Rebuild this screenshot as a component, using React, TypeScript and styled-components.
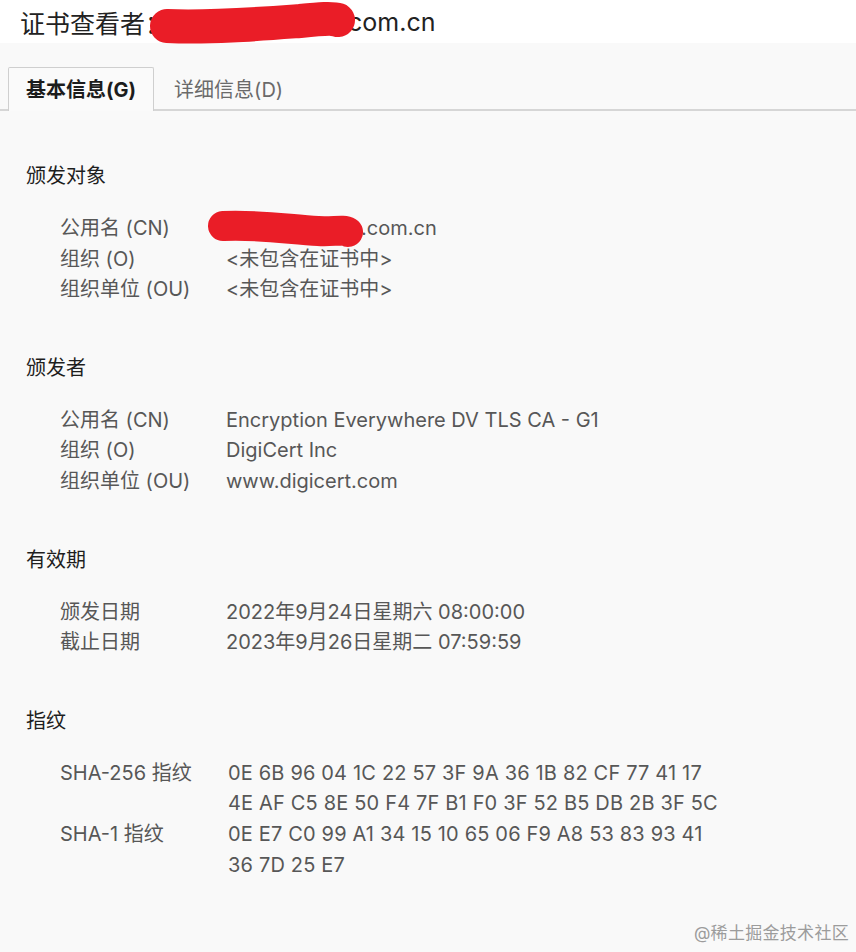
import React from "react";
import styled, { createGlobalStyle } from "styled-components";

const Global = createGlobalStyle`
  html, body {
    margin: 0;
    padding: 0;
    background: #f9f9f9;
  }
  body {
    font-family: Inter, "Noto Sans CJK SC", sans-serif;
  }
`;

const Page = styled.div`
  position: relative;
  min-height: 952px;
  background: #f9f9f9;
  overflow: hidden;
`;

const TitleBar = styled.div`
  height: 43px;
  background: #ffffff;
  display: flex;
  align-items: center;
  padding-left: 20px;
  font-size: 25px;
  color: #222;
  white-space: nowrap;
`;

const Redaction = styled.span<{ $w: number }>`
  position: relative;
  display: inline-block;
  width: ${(p) => p.$w}px;
  height: 1em;
  vertical-align: middle;
`;

const Scribble = styled.svg`
  position: absolute;
  overflow: visible;
  pointer-events: none;
`;

const TabBar = styled.div`
  display: flex;
  align-items: flex-end;
  padding: 24px 0 0 8px;
  border-bottom: 2px solid #d6d6d6;
`;

const Tab = styled.div<{ $active?: boolean }>`
  height: 44px;
  box-sizing: border-box;
  display: flex;
  align-items: center;
  padding: 0 18px 2px 18px;
  font-size: 20px;
  font-weight: ${(p) => (p.$active ? 700 : 400)};
  color: ${(p) => (p.$active ? "#1c1c1c" : "#6a6a6a")};
  background: ${(p) => (p.$active ? "#fafafa" : "transparent")};
  border: 1px solid ${(p) => (p.$active ? "#cfcfcf" : "transparent")};
  border-bottom: none;
  margin-bottom: -2px;
  border-radius: 2px 2px 0 0;
  ${(p) => (p.$active ? "padding-right: 17px; padding-left: 17px;" : "margin-left: 1px;")}
`;

const Content = styled.div`
  padding: 50px 0 0 26px;
  display: flex;
  flex-direction: column;
  gap: 48px;
`;

const Section = styled.section`
  display: flex;
  flex-direction: column;
`;

const Heading = styled.div`
  font-size: 20px;
  line-height: 31px;
  color: #1e1e1e;
  margin-bottom: 21px;
`;

const Rows = styled.div`
  padding-left: 34px;
  display: flex;
  flex-direction: column;
`;

const Row = styled.div`
  display: grid;
  grid-template-columns: 166px 1fr;
  font-size: 20px;
  line-height: 30.6px;
  color: #575757;
  white-space: nowrap;
`;

const Value = styled.div<{ $shift?: number; $spacing?: number }>`
  display: flex;
  flex-direction: column;
  margin-left: ${(p) => p.$shift ?? 0}px;
  letter-spacing: ${(p) => p.$spacing ?? 0}px;
`;

const Watermark = styled.div`
  position: absolute;
  right: 7px;
  bottom: 8px;
  font-size: 17px;
  color: #9c9c9c;
  letter-spacing: 0.3px;
`;

const RedScribble: React.FC<{ left: number; top: number; w: number; h: number; d: string; sw: number }> = ({
  left,
  top,
  w,
  h,
  d,
  sw,
}) => (
  <Scribble style={{ left, top }} width={w} height={h} viewBox={`0 0 ${w} ${h}`}>
    <path d={d} fill="none" stroke="#ea1d27" strokeWidth={sw} strokeLinecap="round" strokeLinejoin="round" />
  </Scribble>
);

type RowData = { label: string; value: React.ReactNode; shift?: number; spacing?: number };

const sections: { title: string; rows: RowData[] }[] = [
  {
    title: "颁发对象",
    rows: [
      {
        label: "公用名 (CN)",
        value: (
          <span>
            <Redaction $w={135}>
              <RedScribble
                left={-18}
                top={-10}
                w={160}
                h={44}
                sw={30}
                d="M15 16 C 50 14, 85 20, 110 21 C 125 22, 135 19, 140 22"
              />
            </Redaction>
            .com.cn
          </span>
        ),
      },
      { label: "组织 (O)", value: "<未包含在证书中>" },
      { label: "组织单位 (OU)", value: "<未包含在证书中>" },
    ],
  },
  {
    title: "颁发者",
    rows: [
      { label: "公用名 (CN)", value: "Encryption Everywhere DV TLS CA - G1" },
      { label: "组织 (O)", value: "DigiCert Inc" },
      { label: "组织单位 (OU)", value: "www.digicert.com" },
    ],
  },
  {
    title: "有效期",
    rows: [
      { label: "颁发日期", value: "2022年9月24日星期六 08:00:00" },
      { label: "截止日期", value: "2023年9月26日星期二 07:59:59" },
    ],
  },
  {
    title: "指纹",
    rows: [
      {
        label: "SHA-256 指纹",
        shift: 2,
        spacing: 0.17,
        value: [
          "0E 6B 96 04 1C 22 57 3F 9A 36 1B 82 CF 77 41 17",
          "4E AF C5 8E 50 F4 7F B1 F0 3F 52 B5 DB 2B 3F 5C",
        ],
      },
      {
        label: "SHA-1 指纹",
        shift: 2,
        spacing: 0.17,
        value: ["0E E7 C0 99 A1 34 15 10 65 06 F9 A8 53 83 93 41", "36 7D 25 E7"],
      },
    ],
  },
];

export default function App() {
  return (
    <Page>
      <Global />
      <TitleBar>
        <span>证书查看者：</span>
        <Redaction $w={178}>
          <RedScribble
            left={-20}
            top={-5}
            w={205}
            h={46}
            sw={34}
            d="M17 22 C 60 24, 110 20, 150 17 C 170 15, 182 14, 188 16"
          />
        </Redaction>
        <span>com.cn</span>
      </TitleBar>
      <TabBar>
        <Tab $active>基本信息(G)</Tab>
        <Tab>详细信息(D)</Tab>
      </TabBar>
      <Content>
        {sections.map((s) => (
          <Section key={s.title}>
            <Heading>{s.title}</Heading>
            <Rows>
              {s.rows.map((r) => (
                <Row key={r.label}>
                  <span>{r.label}</span>
                  <Value $shift={r.shift} $spacing={r.spacing}>
                    {Array.isArray(r.value)
                      ? (r.value as string[]).map((line) => <span key={line}>{line}</span>)
                      : r.value}
                  </Value>
                </Row>
              ))}
            </Rows>
          </Section>
        ))}
      </Content>
      <Watermark>@稀土掘金技术社区</Watermark>
    </Page>
  );
}
